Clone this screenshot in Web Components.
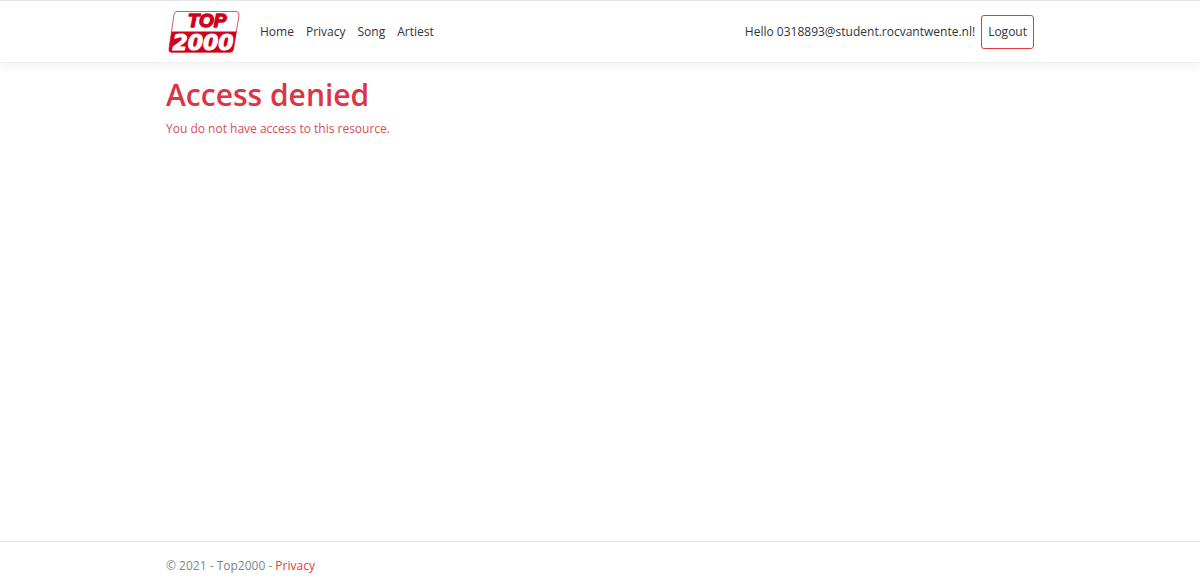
<!DOCTYPE html>
<html lang="en">
<head>
  <meta charset="utf-8">
  <meta name="viewport" content="width=device-width, initial-scale=1">
  <title>Access denied - Top2000</title>
  <style>
    body {
      --text: #303437;
      --danger: #dc3545;
      --danger-soft: #d84d59;
      --accent: #e8383b;
      --muted: #7c848b;
      --line: #e3e5e7;
      --container: 892px;
      margin: 0;
      font: 12px/20px "Open Sans", "Noto Sans", sans-serif;
      color: var(--text);
      background: #fff;
    }
  </style>
</head>
<body>
  <page-layout>
    <site-header slot="header">
      <nav-link href="#home">Home</nav-link>
      <nav-link href="#privacy">Privacy</nav-link>
      <nav-link href="#song">Song</nav-link>
      <nav-link href="#artiest">Artiest</nav-link>
      <user-menu slot="user" name="0318893@student.rocvantwente.nl"></user-menu>
    </site-header>
    <error-message heading="Access denied">You do not have access to this resource.</error-message>
    <site-footer slot="footer" year="2021" href="#privacy"></site-footer>
  </page-layout>

  <script>
    class PageLayout extends HTMLElement {
      constructor () {
        super()
        this.shadow = this.attachShadow({ mode: 'open' })
      }

      connectedCallback () {
        this.shadow.innerHTML =
        /*html*/`
        <style>
          :host {
            display: flex;
            flex-direction: column;
            min-height: 100vh;
          }
          main {
            box-sizing: border-box;
            flex: 1;
            width: 100%;
            max-width: var(--container);
            margin: 0 auto;
            padding: 12px;
          }
        </style>
        <slot name="header"></slot>
        <main><slot></slot></main>
        <slot name="footer"></slot>
        `
      }
    }

    class SiteHeader extends HTMLElement {
      constructor () {
        super()
        this.shadow = this.attachShadow({ mode: 'open' })
      }

      connectedCallback () {
        this.shadow.innerHTML =
        /*html*/`
        <style>
          :host {
            display: block;
            border-top: 1px solid var(--line);
            border-bottom: 1px solid #f0f0f0;
            box-shadow: 0 4px 10px rgba(0, 0, 0, 0.05);
          }
          header {
            box-sizing: border-box;
            display: flex;
            align-items: center;
            max-width: var(--container);
            margin: 0 auto;
            padding: 8px 12px;
          }
          .brand {
            display: flex;
            margin-right: 14px;
          }
          nav {
            display: flex;
            flex: 1;
          }
        </style>
        <header>
          <a class="brand" href="#home" aria-label="Top 2000"><top-logo></top-logo></a>
          <nav><slot></slot></nav>
          <slot name="user"></slot>
        </header>
        `
      }
    }

    class TopLogo extends HTMLElement {
      constructor () {
        super()
        this.shadow = this.attachShadow({ mode: 'open' })
      }

      connectedCallback () {
        this.shadow.innerHTML =
        /*html*/`
        <style>
          :host {
            display: block;
          }
          svg {
            display: block;
            width: 74px;
            height: 45px;
          }
          text {
            font-weight: bold;
            font-style: italic;
            text-anchor: middle;
            stroke-linejoin: round;
          }
          .top {
            font-family: "Liberation Sans", Arial, sans-serif;
            font-size: 19px;
            fill: #d0021b;
            stroke: #d0021b;
            stroke-width: 1.4;
          }
          .number {
            font-family: "DejaVu Sans", Verdana, sans-serif;
            font-size: 22px;
            fill: #fff;
            stroke: #fff;
            stroke-width: 1;
          }
        </style>
        <svg viewBox="0 0 74 45">
          <path d="M11 2.500H70Q73.500 2.500 73 6L67.500 40Q67 43 64 43H5.500Q2.500 43 3 40L8 5.500Q8.500 2.500 11 2.500Z" fill="#fff" stroke="#d45a68" stroke-width="1"/>
          <path d="M5.500 22.500H70.500L67.500 40Q67 43.500 64 43.500H5.500Q2.500 43.500 3 40Z" fill="#d0021b"/>
          <text class="top" x="41" y="18">TOP</text>
          <text class="number" x="37" y="41">2000</text>
        </svg>
        `
      }
    }

    class NavLink extends HTMLElement {
      constructor () {
        super()
        this.shadow = this.attachShadow({ mode: 'open' })
      }

      connectedCallback () {
        this.shadow.innerHTML =
        /*html*/`
        <style>
          :host {
            display: block;
          }
          a {
            display: block;
            padding: 6px;
            color: inherit;
            text-decoration: none;
          }
        </style>
        <a href="${this.getAttribute('href')}"><slot></slot></a>
        `
      }
    }

    class UserMenu extends HTMLElement {
      constructor () {
        super()
        this.shadow = this.attachShadow({ mode: 'open' })
      }

      connectedCallback () {
        this.shadow.innerHTML =
        /*html*/`
        <style>
          :host {
            display: flex;
            align-items: center;
            gap: 6px;
          }
          button {
            padding: 6px;
            border: 1px solid var(--accent);
            border-radius: 3px;
            background: none;
            font: inherit;
            color: inherit;
            cursor: pointer;
          }
        </style>
        <span>Hello ${this.getAttribute('name')}!</span>
        <button type="button">Logout</button>
        `
      }
    }

    class ErrorMessage extends HTMLElement {
      constructor () {
        super()
        this.shadow = this.attachShadow({ mode: 'open' })
      }

      connectedCallback () {
        this.shadow.innerHTML =
        /*html*/`
        <style>
          :host {
            display: block;
            color: var(--danger);
          }
          h1 {
            margin: 0 0 4px;
            font-size: 30px;
            line-height: 40px;
            font-weight: 600;
          }
          p {
            margin: 0;
            color: var(--danger-soft);
          }
        </style>
        <h1>${this.getAttribute('heading')}</h1>
        <p><slot></slot></p>
        `
      }
    }

    class SiteFooter extends HTMLElement {
      constructor () {
        super()
        this.shadow = this.attachShadow({ mode: 'open' })
      }

      connectedCallback () {
        this.shadow.innerHTML =
        /*html*/`
        <style>
          :host {
            display: block;
            border-top: 1px solid var(--line);
            color: var(--muted);
          }
          footer {
            box-sizing: border-box;
            max-width: var(--container);
            margin: 0 auto;
            padding: 14px 12px 12px;
          }
          a {
            color: var(--accent);
            text-decoration: none;
          }
        </style>
        <footer>&copy; ${this.getAttribute('year')} - Top2000 - <a href="${this.getAttribute('href')}">Privacy</a></footer>
        `
      }
    }

    customElements.define('page-layout', PageLayout);
    customElements.define('site-header', SiteHeader);
    customElements.define('top-logo', TopLogo);
    customElements.define('nav-link', NavLink);
    customElements.define('user-menu', UserMenu);
    customElements.define('error-message', ErrorMessage);
    customElements.define('site-footer', SiteFooter);
  </script>
</body>
</html>
